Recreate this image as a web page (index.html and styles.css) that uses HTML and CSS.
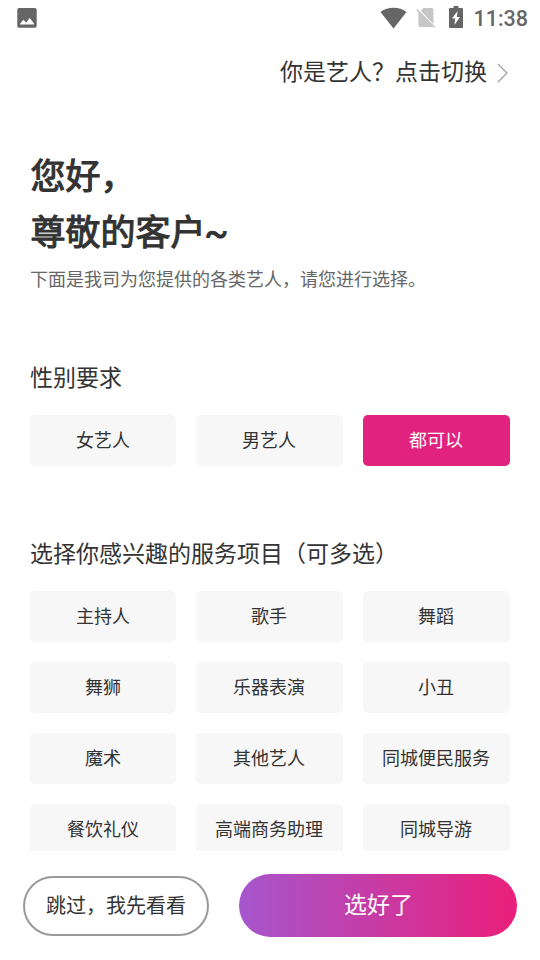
FILE: index.html
```html
<!DOCTYPE html>
<html lang="zh-CN">
<head>
<meta charset="utf-8">
<title>选择艺人</title>
<link rel="stylesheet" href="styles.css">
</head>
<body>
<div class="screen">
  <header class="status">
    <svg class="picture" width="20" height="20" viewBox="0 0 20 20"><path fill="#666" fill-rule="evenodd" d="M2 0h16q1.700 0 1.700 2v16q0 1.700-1.700 1.700H2Q.3 19.700.3 18V2Q.3 0 2 0zM3 16.500h14v-1l-4.300-5.500-3.700 4.800-2.500-3-3.500 4z"/></svg>
    <div class="status-right">
      <svg class="wifi" width="28" height="22" viewBox="0 0 28 22"><path fill="#666" d="M13.500 21.500L.5 5C4.300 2 8.700.8 13.500.8S22.700 2 26.500 5z"/></svg>
      <svg class="sim" width="20" height="22" viewBox="0 0 20 22"><path fill="#c6c6c6" d="M7.500 1h8.300q1.700 0 1.700 1.700v14.300L4.800 3.900zM1.300 1.900L19.300 20l-1.200 1.100-1.700-1.700q-.3.600-1.200.6H4.100q-1.700 0-1.700-1.700V5.300L.2 3z"/></svg>
      <svg class="battery" width="14" height="22" viewBox="0 0 14 22"><path fill="#666" fill-rule="evenodd" d="M4.500 0h5v2H13q1 0 1 1v18q0 1-1 1H1q-1 0-1-1V3q0-1 1-1h3.500zM8.500 5L3 12.500h3.200L5.400 19l5.600-8H7.800z"/></svg>
      <span class="time">11:38</span>
    </div>
  </header>
  <div class="switch"><span>你是艺人？点击切换</span><svg width="12" height="20" viewBox="0 0 12 20"><path d="M1 1l9 9-9 9" fill="none" stroke="#999" stroke-width="1.100"/></svg></div>
  <main>
    <h1>您好，<br>尊敬的客户<span class="tilde">~</span></h1>
    <p class="intro">下面是我司为您提供的各类艺人，请您进行选择。</p>
    <h2>性别要求</h2>
    <div class="options"><span>女艺人</span><span>男艺人</span><span class="selected">都可以</span></div>
    <h2 class="services">选择你感兴趣的服务项目（可多选）</h2>
    <div class="options">
      <span>主持人</span><span>歌手</span><span>舞蹈</span>
      <span>舞狮</span><span>乐器表演</span><span>小丑</span>
      <span>魔术</span><span>其他艺人</span><span>同城便民服务</span>
      <span>餐饮礼仪</span><span>高端商务助理</span><span>同城导游</span>
    </div>
  </main>
  <footer><button class="skip">跳过，我先看看</button><button class="done">选好了</button></footer>
</div>
</body>
</html>
```

FILE: styles.css
```css
* { box-sizing: border-box; }
body { margin: 0; background: #fff; color: #333; font-family: "Noto Sans CJK SC", sans-serif; }
.screen { width: 540px; height: 960px; display: flex; flex-direction: column; overflow: hidden; }
svg { display: block; flex: none; }
.status { height: 36px; flex: none; display: flex; align-items: center; justify-content: space-between; padding: 0 12px 0 17px; }
.status-right { display: flex; align-items: center; }
.wifi { margin-bottom: 1px; }
.sim { margin-left: 8px; }
.battery { margin: 0 0 2px 13px; }
.time { margin: 2px 0 0 10px; color: #666; font: 500 21.500px/24px Roboto, sans-serif; }
.switch { height: 74px; flex: none; display: flex; justify-content: flex-end; align-items: center; padding: 0 31px 0 0; font-size: 23px; line-height: 34px; gap: 10px; }
.switch span { margin-bottom: 7px; }
main { flex: none; height: 741px; padding: 36px 30px 0; overflow: hidden; }
h1 { height: 112px; margin: 0; padding-left: 0.5px; font-size: 35px; line-height: 56px; font-weight: 400; -webkit-text-stroke: 1.100px #333; }
.tilde { margin-left: -1px; font-family: Roboto, sans-serif; line-height: 1; }
.intro { margin: 6px 0 0; font-size: 18px; line-height: 28px; color: #666; }
h2 { margin: 67px 0 22px; font-size: 23px; line-height: 34px; font-weight: 400; }
.services { margin-top: 69px; }
.options { display: grid; grid-template-columns: 146px 147px 147px; gap: 20px; }
.options span { height: 51px; padding-right: 1px; border-radius: 5px; background: #f7f7f7; font-size: 18px; line-height: 48px; text-align: center; white-space: nowrap; }
.options span:nth-child(3n + 1) { padding-right: 0; }
.options .selected { background: #e1237f; color: #fff; }
footer { flex: none; height: 109px; display: flex; align-items: flex-start; gap: 30px; padding: 23px 23px 0; }
button { font-family: inherit; border: 0; padding: 0 0 3px; }
.skip { width: 186px; height: 60px; margin-top: 2px; border: 2px solid #999; border-radius: 30px; background: #fff; color: #333; font-size: 20px; }
.done { flex: 1; height: 63px; border-radius: 32px; background: linear-gradient(90deg, #a656cd, #ea1f7b); color: #fff; font-size: 23px; padding: 0 0 5px 1px; }
```
